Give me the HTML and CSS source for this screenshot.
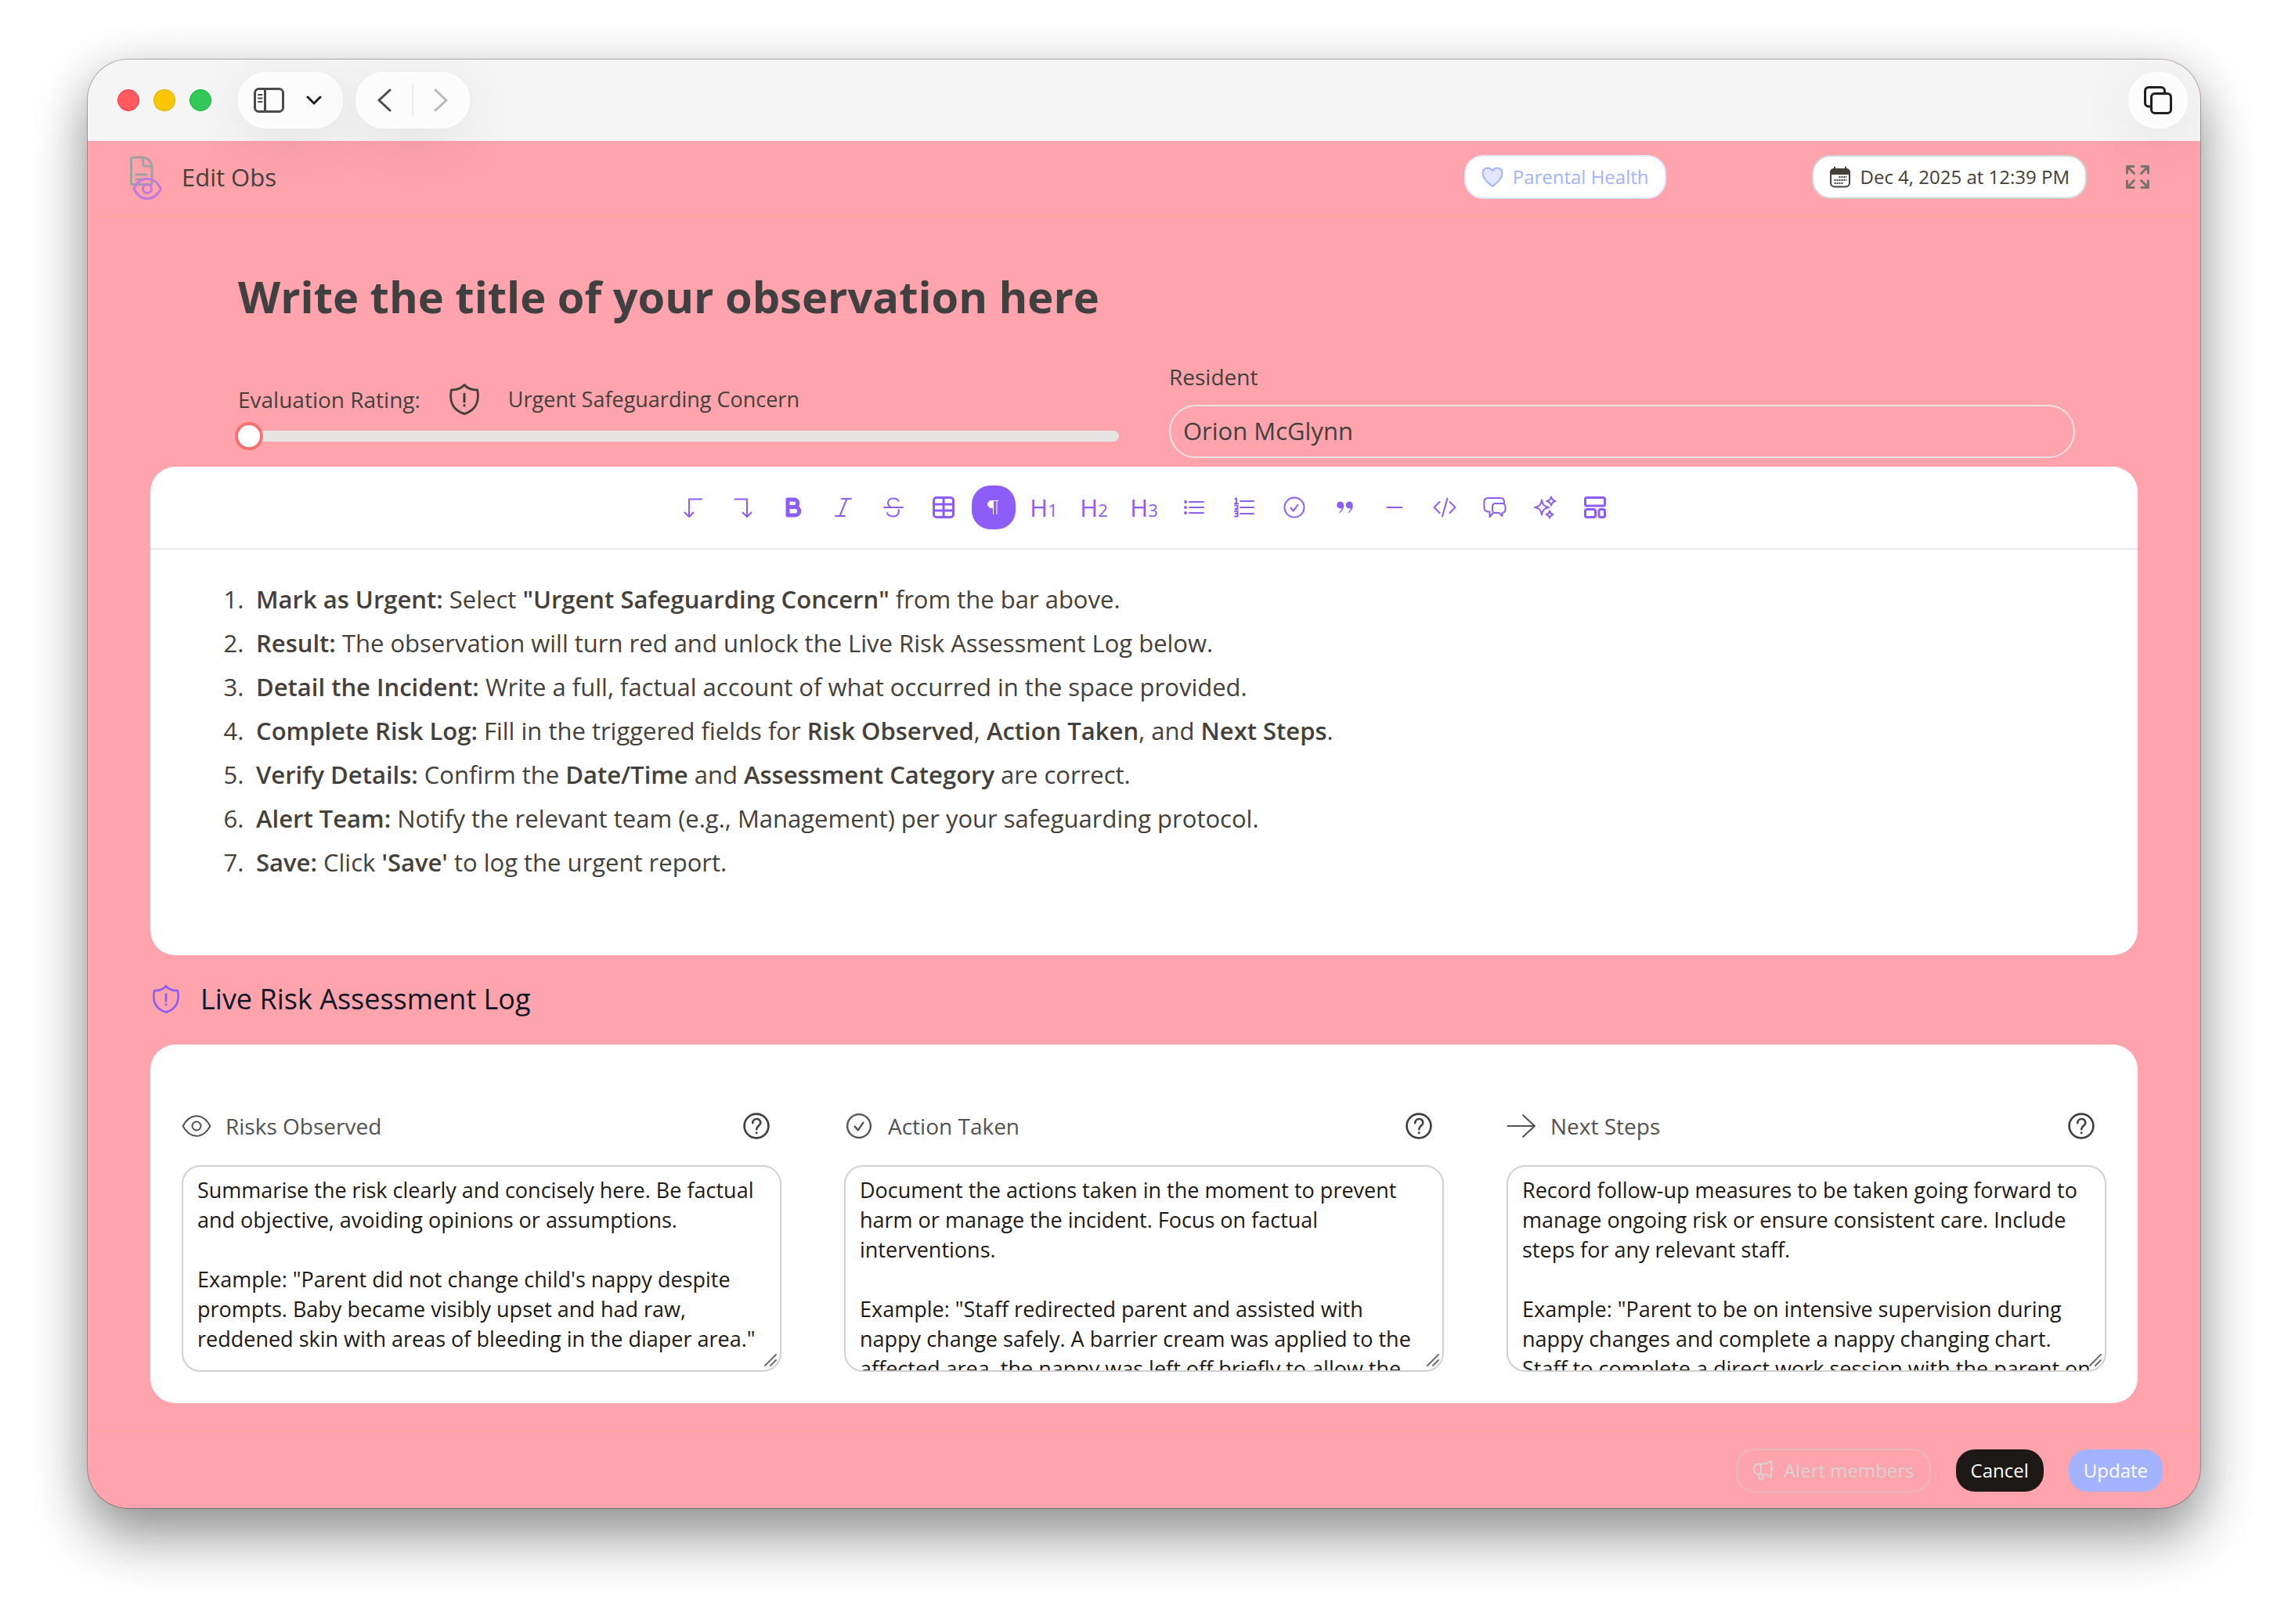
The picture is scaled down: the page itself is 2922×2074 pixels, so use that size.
FILE: index.html
```
<!DOCTYPE html>
<html lang="en">
<head>
    <meta charset="UTF-8">
    <meta name="viewport" content="width=device-width, initial-scale=1.0">
    <title>Edit Obs</title>
    <link rel="stylesheet" href="styles.css">
</head>
<body>
    <!-- shared icons -->
    <svg class="sprite" aria-hidden="true">
        <symbol id="shield" viewBox="0 0 40 40">
            <path d="M20 1.500C16 6 10 8 2.500 8C-0.500 23 5 34 20 38.500C35 34 40.500 23 37.500 8C30 8 24 6 20 1.500z" transform="translate(1 0) scale(.95 1)"/>
            <path d="M20 13v10"/>
            <path d="M20 27.500v.5"/>
        </symbol>
        <symbol id="check" viewBox="0 0 32 32">
            <circle cx="16" cy="16" r="12.500"/>
            <path d="M11.500 16.500l3.500 4 5.500-8"/>
        </symbol>
        <symbol id="help" viewBox="0 0 32 32">
            <circle cx="16" cy="16" r="14.500"/>
            <path d="M11.500 12.500c0-6.500 9.500-6.500 9.500-.5 0 4-4.800 3.500-4.800 8"/>
            <path d="M16.200 24v.5"/>
        </symbol>
        <symbol id="grip" viewBox="0 0 16 16">
            <path d="M1 15L15 1M8 15l7-7"/>
        </symbol>
    </svg>

    <div class="window">
        <div class="titlebar">
            <div class="lights">
                <span class="light red"></span>
                <span class="light yellow"></span>
                <span class="light green"></span>
            </div>
            <div class="pill">
                <button class="pill-button" aria-label="Sidebar">
                    <svg class="icon-sidebar" viewBox="0 0 40 32"><rect x="1.500" y="1.500" width="36" height="29" rx="5"/><path d="M14.500 2v28"/><path class="thin" d="M6 9h4.500M6 13.500h4.500M6 18h4.500"/></svg>
                </button>
                <button class="pill-button" aria-label="Tab groups">
                    <svg class="icon-down" viewBox="0 0 20 12"><path d="M2 2l8 8 8-8"/></svg>
                </button>
            </div>
            <div class="pill nav">
                <button class="pill-button" aria-label="Back">
                    <svg class="icon-nav" viewBox="0 0 18 30"><path d="M16 2L2 15l14 13"/></svg>
                </button>
                <span class="separator"></span>
                <button class="pill-button" aria-label="Forward" disabled>
                    <svg class="icon-nav" viewBox="0 0 18 30"><path d="M2 2l14 13L2 28"/></svg>
                </button>
            </div>
            <button class="pill round" aria-label="Show tabs">
                <svg class="icon-tabs" viewBox="0 0 36 36"><path d="M8 26H6a4.500 4.500 0 0 1-4.500-4.500V6A4.500 4.500 0 0 1 6 1.500h16A4.500 4.500 0 0 1 26.500 6v2"/><rect x="9.500" y="9.500" width="25" height="25" rx="4.500"/></svg>
            </button>
        </div>

        <header class="header">
            <svg class="icon-doc" viewBox="0 0 42 60">
                <g class="doc"><path d="M3.500 5H15C23 5 28 11 28 18v19.500a2 2 0 0 1-2 2H3.500a2 2 0 0 1-2-2V7a2 2 0 0 1 2-2z"/><path d="M13 5c4 0 4 3 4 6.500v2.500a2 2 0 0 0 2 2h3.500c3 0 5 0 5.500 2"/><path d="M8 27h13M8 33h7"/></g>
                <g class="eye"><path d="M5 45C13 28 31 28 39.500 45C31 62 13 62 5 45z"/><circle cx="22" cy="45" r="5.500"/></g>
            </svg>
            <h1 class="header-title">Edit Obs</h1>
            <button class="badge category">
                <svg class="icon-heart" viewBox="0 0 28 28"><path d="M14 26C6 19.500 1.500 15 1.500 9C1.500 2 10 .500 14 6C18 .500 26.500 2 26.500 9C26.500 15 22 19.500 14 26z"/></svg>
                Parental Health
            </button>
            <button class="badge date">
                <svg class="icon-calendar" viewBox="0 0 28 28"><rect x="2" y="4" width="24" height="22.500" rx="5"/><path class="solid" d="M2 10V8a4 4 0 0 1 4-4h16a4 4 0 0 1 4 4v2z"/><path d="M7 1.500v4M21 1.500v4"/><path class="dots" d="M12.500 14h10M6.500 18h16M6.500 22h12"/></svg>
                Dec 4, 2025 at 12:39 PM
            </button>
            <button class="expand" aria-label="Full screen">
                <svg class="icon-expand" viewBox="0 0 30 30"><path d="M10 1.500H1.500V10M1.500 1.500l9 9M20 1.500h8.500V10M28.500 1.500l-9 9M10 28.500H1.500V20M1.500 28.500l9-9M20 28.500h8.500V20M28.500 28.500l-9-9"/></svg>
            </button>
        </header>

        <main class="content">
            <input type="text" class="title" aria-label="Title" value="Write the title of your observation here">

            <div class="fields">
                <div class="field rating">
                    <div class="rating-row">
                        <label class="label" for="rating">Evaluation Rating:</label>
                        <svg class="icon-shield"><use href="#shield"/></svg>
                        <span class="rating-value">Urgent Safeguarding Concern</span>
                    </div>
                    <input type="range" id="rating" class="slider" min="0" max="10" value="0">
                </div>
                <div class="field">
                    <label class="label" for="resident">Resident</label>
                    <input type="text" id="resident" class="resident" value="Orion McGlynn">
                </div>
            </div>

            <section class="card">
                <div class="toolbar">
                    <button class="tool" aria-label="Undo"><svg><path d="M27 5.500H11V28M5.500 22.500L11 28l5.500-5.500"/></svg></button>
                    <button class="tool" aria-label="Redo"><svg><path d="M5.500 5.500H21V28M15.500 22.500L21 28l5.500-5.500"/></svg></button>
                    <button class="tool" aria-label="Bold"><svg class="heavy"><path d="M9 6H17a4.500 4.500 0 0 1 0 9.500H9zM9 15.500h9.500a5 5 0 0 1 0 10.500H9z"/></svg></button>
                    <button class="tool" aria-label="Italic"><svg><path d="M14 5h12M6 27h12M20.500 5l-9 22"/></svg></button>
                    <button class="tool" aria-label="Strikethrough"><svg><path d="M22.500 8C21.500 5.500 19 4.500 16 4.500c-4 0-7 2-7 5.500 0 3 1.500 4.500 4 6M4 16h24M22.500 19c1.500 5-2 8.500-6.500 8.500-4 0-7-1.500-8-4.500"/></svg></button>
                    <button class="tool" aria-label="Table"><svg class="medium"><rect x="3.500" y="3.500" width="25" height="25" rx="3.500"/><path d="M16 3.500v25M3.500 12h25M3.500 20h25"/></svg></button>
                    <button class="tool active" aria-label="Paragraph"><svg class="fine"><path class="solid" d="M15 7.500h-2a4.500 4.500 0 0 0 0 9h2z"/><path d="M22 7.500H14M15.500 8v16.500M20 8v16.500"/></svg></button>
                    <button class="tool heading" aria-label="Heading 1">H<small>1</small></button>
                    <button class="tool heading" aria-label="Heading 2">H<small>2</small></button>
                    <button class="tool heading" aria-label="Heading 3">H<small>3</small></button>
                    <button class="tool" aria-label="Bullet list"><svg><path d="M10 9h18M10 16h18M10 23h18"/><path class="bullets" d="M5 9h.01M5 16h.01M5 23h.01"/></svg></button>
                    <button class="tool" aria-label="Numbered list"><svg><path d="M11 8h17M11 16h17M11 24h17"/><path d="M4.500 5L6 4.500V11M4 11h4M4 13.500h3.500V16L4.500 18.500H8M4 21h3.500v6.500H4M5 24h2"/></svg></button>
                    <button class="tool" aria-label="Task list"><svg><use href="#check"/></svg></button>
                    <button class="tool" aria-label="Quote"><svg class="hair"><path class="solid" d="M10.500 8.500a4.500 4.500 0 1 0 .5 9h2L8.500 23.500C13.500 21.500 15.500 17 15.200 13a4.500 4.500 0 0 0-4.700-4.500zM22 8.500a4.500 4.500 0 1 0 .5 9h2L20 23.500C25 21.500 27 17 26.700 13a4.500 4.500 0 0 0-4.700-4.500z"/></svg></button>
                    <button class="tool" aria-label="Divider"><svg><path d="M6.500 16h19"/></svg></button>
                    <button class="tool" aria-label="Code"><svg><path d="M9.500 9L2.500 16l7 7M22.500 9l7 7-7 7M19.500 4.500L13 27.500"/></svg></button>
                    <button class="tool" aria-label="Comment"><svg><path d="M28 12V9c0-3-2-5-5-5H7.500C4.500 4 2.500 6 2.500 9v8c0 3 1.500 4 5 4.500h2V28l4-4.500"/><path d="M16.500 11h9a4 4 0 0 1 4 4v4c0 2.500-1.500 3.500-4 4v4l-4-4h-5a3.500 3.500 0 0 1-3.500-3.500V15a4 4 0 0 1 3.500-4z"/></svg></button>
                    <button class="tool" aria-label="AI"><svg><path d="M12 6.500c1 6 3 8.500 9 9.500-6 1-8 3.500-9 9.500-1-6-3-8.500-9-9.500 6-1 8-3.500 9-9.500zM24 2.500c.8 3.500 2 4.700 5.500 5.500-3.500.8-4.700 2-5.500 5.500-.8-3.500-2-4.700-5.500-5.500 3.500-.8 4.700-2 5.500-5.500zM22 20.500c.7 3 1.800 3.800 4.500 4.500-2.700.7-3.800 1.800-4.500 4.500-.7-2.700-1.800-3.800-4.500-4.500 2.700-.7 3.800-1.800 4.500-4.500z"/></svg></button>
                    <button class="tool" aria-label="Template"><svg class="medium"><rect x="3.500" y="3.500" width="25" height="10.500" rx="2"/><rect x="3.500" y="18.500" width="13" height="10" rx="2"/><rect x="21" y="18.500" width="7.500" height="10" rx="2"/></svg></button>
                </div>
                <ol class="steps">
                    <li><strong>Mark as Urgent:</strong> Select <strong>"Urgent Safeguarding Concern"</strong> from the bar above.</li>
                    <li><strong>Result:</strong> The observation will turn red and unlock the Live Risk Assessment Log below.</li>
                    <li><strong>Detail the Incident:</strong> Write a full, factual account of what occurred in the space provided.</li>
                    <li><strong>Complete Risk Log:</strong> Fill in the triggered fields for <strong>Risk Observed</strong>, <strong>Action Taken</strong>, and <strong>Next Steps</strong>.</li>
                    <li><strong>Verify Details:</strong> Confirm the <strong>Date/Time</strong> and <strong>Assessment Category</strong> are correct.</li>
                    <li><strong>Alert Team:</strong> Notify the relevant team (e.g., Management) per your safeguarding protocol.</li>
                    <li><strong>Save:</strong> Click <strong>'Save'</strong> to log the urgent report.</li>
                </ol>
            </section>

            <h2 class="log-title">
                <svg class="icon-log"><use href="#shield"/></svg>
                Live Risk Assessment Log
            </h2>

            <section class="card log">
                <div class="log-column">
                    <div class="log-head">
                        <svg class="icon-head" viewBox="0 0 38 32"><path d="M1.500 16C11 -1 27 -1 36.500 16C27 33 11 33 1.500 16z"/><circle cx="19" cy="16" r="5.500"/></svg>
                        <label for="risks">Risks Observed</label>
                        <button class="help" aria-label="Help with risks"><svg><use href="#help"/></svg></button>
                    </div>
                    <div class="log-box">
                        <textarea id="risks">Summarise the risk clearly and concisely here. Be factual and objective, avoiding opinions or assumptions.

Example: "Parent did not change child's nappy despite prompts. Baby became visibly upset and had raw, reddened skin with areas of bleeding in the diaper area."</textarea>
                        <svg class="grip"><use href="#grip"/></svg>
                    </div>
                </div>
                <div class="log-column">
                    <div class="log-head">
                        <svg class="icon-head"><use href="#check"/></svg>
                        <label for="action">Action Taken</label>
                        <button class="help" aria-label="Help with action"><svg><use href="#help"/></svg></button>
                    </div>
                    <div class="log-box">
                        <textarea id="action">Document the actions taken in the moment to prevent harm or manage the incident. Focus on factual interventions.

Example: "Staff redirected parent and assisted with nappy change safely. A barrier cream was applied to the affected area, the nappy was left off briefly to allow the</textarea>
                        <svg class="grip"><use href="#grip"/></svg>
                    </div>
                </div>
                <div class="log-column">
                    <div class="log-head">
                        <svg class="icon-head" viewBox="0 0 36 32"><path d="M1.500 16h32M20 3l14 13-14 13"/></svg>
                        <label for="next">Next Steps</label>
                        <button class="help" aria-label="Help with next steps"><svg><use href="#help"/></svg></button>
                    </div>
                    <div class="log-box">
                        <textarea id="next">Record follow-up measures to be taken going forward to manage ongoing risk or ensure consistent care. Include steps for any relevant staff.

Example: "Parent to be on intensive supervision during nappy changes and complete a nappy changing chart. Staff to complete a direct work session with the parent on</textarea>
                        <svg class="grip"><use href="#grip"/></svg>
                    </div>
                </div>
            </section>
        </main>

        <footer class="footer">
            <button class="button alert" disabled>
                <svg class="icon-horn" viewBox="0 0 28 28"><path d="M12 5.500H8a6.500 6.500 0 0 0 0 13h4c5 0 9 2 12 4.500V1.500C21 4 17 5.500 12 5.500zM11 5.500v13M24 9.500c2.500 1.500 2.500 4 0 5.500M7 18.500l3 7.500 4-1.500-2-5.500"/></svg>
                Alert members
            </button>
            <button class="button cancel">Cancel</button>
            <button class="button update">Update</button>
        </footer>
    </div>
</body>
</html>
```
FILE: styles.css
```
* {
    box-sizing: border-box;
}
body {
    margin: 0;
    padding: 76px 112px 148px;
    min-height: 100vh;
    display: flex;
    background-color: #fff;
    color: #44403b;
    font-family: "Open Sans", "Noto Sans", sans-serif;
    font-size: 27px;
    line-height: 38px;
}
button, input, textarea {
    font: inherit;
    color: inherit;
    margin: 0;
    padding: 0;
    border: none;
    background: none;
}
svg {
    flex: none;
    fill: none;
    stroke: currentColor;
    stroke-width: 2;
    stroke-linecap: round;
    stroke-linejoin: round;
}
.sprite {
    position: absolute;
    width: 0;
    height: 0;
}
.solid {
    fill: currentColor;
}

/* window frame */
.window {
    flex: 1;
    min-width: 0;
    display: flex;
    flex-direction: column;
    overflow: hidden;
    border-radius: 52px;
    background-color: #ffa3ad;
    box-shadow: 0 0 0 1px rgba(0, 0, 0, 0.28), 0 36px 72px rgba(0, 0, 0, 0.42), 0 0 60px rgba(0, 0, 0, 0.08);
}
.titlebar {
    position: relative;
    z-index: 1;
    display: flex;
    align-items: center;
    height: 104px;
    padding: 0 16px 0 38px;
    background-color: #f5f5f5;
}
.lights {
    display: flex;
    gap: 18px;
    margin-right: 34px;
}
.light {
    width: 28px;
    height: 28px;
    border-radius: 50%;
    border: 1px solid rgba(0, 0, 0, 0.1);
}
.red {
    background-color: #ff5a5f;
    border-color: #f9303c;
}
.yellow {
    background-color: #f9c600;
}
.green {
    background-color: #34c759;
    border-color: #00b62f;
}
.pill {
    display: flex;
    align-items: center;
    justify-content: space-between;
    width: 134px;
    height: 72px;
    padding: 0 25px 0 18px;
    border-radius: 36px;
    background-color: #fcfcfc;
    border: 2px solid #fff;
    color: #1f1f1f;
    box-shadow: 0 16px 72px rgba(0, 0, 0, 0.08);
}
.pill-button {
    display: flex;
}
.pill-button:disabled {
    color: #b8b8b8;
}
.nav {
    width: 146px;
    margin-left: 16px;
    padding: 0 26px;
    color: #4a4a4a;
}
.separator {
    width: 2px;
    height: 42px;
    background-color: #ececec;
}
.round {
    width: 76px;
    margin-left: auto;
    padding: 0;
    justify-content: center;
}
.icon-sidebar {
    width: 40px;
    height: 32px;
    color: #4a4a4a;
    stroke-width: 3;
}
.thin {
    stroke-width: 2;
}
.icon-down {
    width: 20px;
    height: 12px;
    stroke-width: 3;
}
.icon-nav {
    width: 18px;
    height: 30px;
    stroke-width: 3;
}
.icon-tabs {
    width: 36px;
    height: 36px;
    stroke-width: 3;
}

/* page header */
.header {
    display: flex;
    align-items: center;
    height: 97px;
    padding: 0 65px 4px 54px;
    border-bottom: 1px solid #ffa494;
}
.icon-doc {
    width: 42px;
    height: 60px;
    margin-right: 24px;
}
.doc {
    color: #a1a1a1;
    stroke-width: 3;
}
.eye {
    color: #c27bdc;
    stroke-width: 3;
}
.header-title {
    margin: 0 auto 0 0;
    font-size: 31px;
    font-weight: 500;
}
.badge {
    display: flex;
    align-items: center;
    gap: 12px;
    height: 56px;
    padding: 0 20px;
    border: 2px solid #d3d3d1;
    border-radius: 24px;
    background-color: #fff;
    font-size: 24px;
}
.category {
    margin-right: 186px;
    border-color: #e0e7ff;
    color: #a3b3ff;
}
.icon-heart {
    width: 28px;
    height: 28px;
    fill: #e0e7ff;
}
.icon-calendar {
    width: 28px;
    height: 28px;
}
.dots {
    stroke-width: 2;
    stroke-linecap: butt;
    stroke-dasharray: 2 1;
}
.expand {
    display: flex;
    margin-left: 50px;
    color: #79716b;
}
.icon-expand {
    width: 30px;
    height: 30px;
    stroke-width: 3;
}

/* observation form */
.content {
    flex: 1;
    display: flex;
    flex-direction: column;
    padding: 65px 80px 36px;
}
.title {
    margin: 0 112px 48px;
    height: 72px;
    color: #404040;
    font-size: 56px;
    font-weight: 700;
    line-height: 72px;
}
.fields {
    display: grid;
    grid-template-columns: 1fr 1fr;
    margin: 0 80px 11px;
}
.field {
    display: flex;
    flex-direction: column;
    justify-content: flex-end;
    padding-left: 32px;
}
.rating {
    padding: 0 32px 10px;
}
.label {
    font-size: 28px;
    font-weight: 500;
}
.rating-row {
    display: flex;
    align-items: center;
    margin-bottom: 9px;
}
.icon-shield {
    width: 40px;
    height: 40px;
    margin: 0 36px;
    stroke-width: 3;
}
.slider {
    appearance: none;
    height: 36px;
    margin-left: -4px;
}
.slider::-webkit-slider-runnable-track {
    height: 14px;
    border-radius: 7px;
    background-color: #e7e5e4;
}
.slider::-webkit-slider-thumb {
    appearance: none;
    width: 36px;
    height: 36px;
    margin-top: -11px;
    border: 4px solid #fa6f6f;
    border-radius: 50%;
    background-color: #fff;
}
.resident {
    height: 68px;
    margin-top: 17px;
    padding: 0 16px 2px;
    border: 2px solid #ece2e1;
    border-radius: 34px;
    font-size: 31px;
}

/* editor */
.card {
    border-radius: 32px;
    background-color: #fff;
}
.toolbar {
    display: flex;
    justify-content: center;
    gap: 8px;
    padding: 24px;
    border-bottom: 2px solid #e5e7eb;
}
.tool {
    display: flex;
    align-items: center;
    justify-content: center;
    width: 56px;
    height: 56px;
    border-radius: 24px;
    color: #8e5cf6;
}
.tool svg {
    width: 32px;
    height: 32px;
}
.tool .hair {
    stroke-width: 0;
}
.tool .fine {
    stroke-width: 1;
}
.tool .medium {
    stroke-width: 3;
}
.tool .heavy {
    stroke-width: 5;
}
.bullets {
    stroke-width: 4;
}
.active {
    background-color: #8e5cf6;
    color: #fff;
}
.heading {
    align-items: baseline;
    font-size: 31px;
    line-height: 56px;
}
.heading small {
    font-size: 22px;
}
.steps {
    margin: 0;
    padding: 35px 40px 91px 135px;
    font-size: 31px;
    line-height: 56px;
}
.steps li::marker {
    content: counter(list-item) ".\2002";
}
.steps strong {
    font-weight: 600;
}

/* risk log */
.log-title {
    display: flex;
    align-items: center;
    gap: 26px;
    margin: 28px 0 30px 2px;
    color: #101828;
    font-size: 36px;
    font-weight: 400;
    line-height: 56px;
}
.icon-log {
    width: 36px;
    height: 36px;
    color: #8e5cf6;
    stroke-width: 3;
}
.log {
    display: grid;
    grid-template-columns: repeat(3, 1fr);
    gap: 80px;
    padding: 84px 40px 40px;
}
.log-head {
    display: flex;
    align-items: center;
    height: 40px;
    margin-bottom: 30px;
    color: #525252;
    font-size: 28px;
}
.icon-head {
    width: 38px;
    height: 38px;
    margin-right: 18px;
}
.help {
    display: flex;
    margin: 0 15px 0 auto;
    color: #404040;
}
.help svg {
    width: 34px;
    height: 34px;
    stroke-width: 2.5;
}
.log-box {
    position: relative;
    height: 264px;
}
.log-box textarea {
    display: block;
    width: 100%;
    height: 100%;
    padding: 11px 17px 9px 18px;
    border: 2px solid #d1d1d1;
    border-radius: 24px;
    color: #1c1917;
    resize: none;
    overflow: hidden;
}
/* resize handle lies over the text box corner */
.grip {
    position: absolute;
    right: 6px;
    bottom: 7px;
    width: 16px;
    height: 16px;
    color: #6b6b6b;
}

/* footer buttons */
.footer {
    display: flex;
    align-items: center;
    justify-content: flex-end;
    gap: 32px;
    height: 98px;
    padding-right: 48px;
    border-top: 1px solid #ffa494;
}
.button {
    display: flex;
    align-items: center;
    gap: 12px;
    height: 54px;
    padding: 0 19px;
    border-radius: 24px;
    color: #fff;
    font-size: 24px;
}
.alert {
    height: 56px;
    border: 2px solid #e8b9bb;
    color: #d6d3d1;
}
.cancel {
    background-color: #1c1917;
}
.update {
    background-color: #a3b3ff;
}
.icon-horn {
    width: 28px;
    height: 28px;
}
```
